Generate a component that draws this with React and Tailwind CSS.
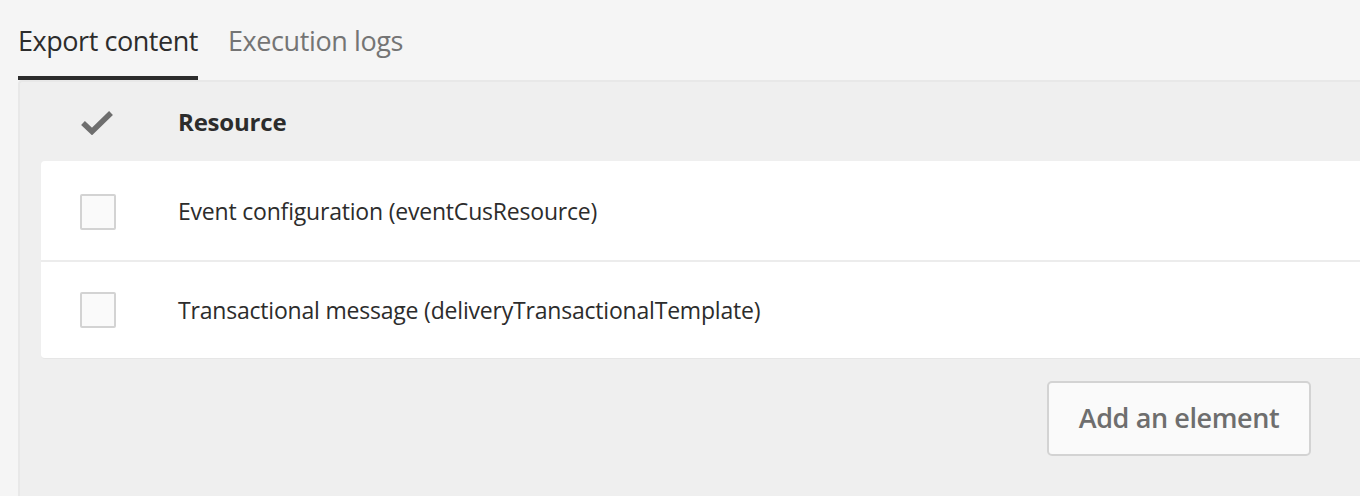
import React from "react";

function Check() {
  return (
    <svg width="34" height="26" viewBox="0 0 34 26" className="block">
      <path d="M3 14 L12 22.5 L31 4" fill="none" stroke="#6e6e6e" strokeWidth="5.5" strokeLinejoin="miter" strokeLinecap="butt" />
    </svg>
  );
}

function Row({ label, h, divider }) {
  return (
    <div className={"flex items-center " + h + (divider ? " border-b-2 border-[#ececec]" : "")}>
      <div className="w-[137px] flex justify-start pl-[39px]">
        <div className="w-[36px] h-[36px] border-2 border-[#d3d3d3] bg-[#fafafa] rounded-[2px]" />
      </div>
      <div className="text-[23px] text-[#2c2c2c] tracking-[-0.2px]">{label}</div>
    </div>
  );
}

export default function App() {
  return (
    <div className="w-[1360px] h-[496px] overflow-hidden bg-[#f5f5f5] font-['Open_Sans',sans-serif]">
      <div className="flex items-end gap-[30px] pl-[18px] h-[80px]">
        <div className="flex flex-col">
          <div className="text-[27px] text-[#2c2c2c] leading-none pb-[22px] tracking-[-0.45px]">Export content</div>
          <div className="h-[4px] bg-[#2c2c2c]" />
        </div>
        <div className="text-[27px] text-[#747474] leading-none pb-[26px] tracking-[-0.4px]">Execution logs</div>
      </div>
      <div className="ml-[18px] h-[416px] bg-[#efefef] border-l-2 border-t-2 border-[#e8e8e8] rounded-tl-[4px] pl-[21px]">
        <div className="flex items-center h-[79px]">
          <div className="w-[137px] pl-[39px]">
            <Check />
          </div>
          <div className="text-[24px] font-bold text-[#2c2c2c] tracking-[-0.2px]">Resource</div>
        </div>
        <div className="bg-white rounded-l-[4px] border-b border-[#e6e6e6]">
          <Row label="Event configuration (eventCusResource)" h="h-[101px] pt-[2px]" divider />
          <Row label="Transactional message (deliveryTransactionalTemplate)" h="h-[96px]" />
        </div>
        <div className="flex justify-end pr-[49px] pt-[22px]">
          <button className="w-[264px] h-[75px] border-2 border-[#d3d3d3] rounded-[5px] bg-[#fafafa] text-[27px] font-semibold text-[#6e6e6e] tracking-[-0.4px]">
            Add an element
          </button>
        </div>
      </div>
    </div>
  );
}
